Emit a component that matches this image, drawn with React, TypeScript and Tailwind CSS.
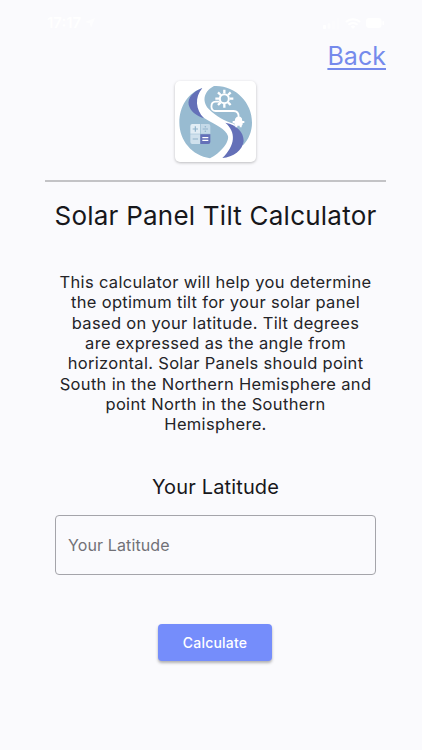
const PARAGRAPH = [
  'This calculator will help you determine',
  'the optimum tilt for your solar panel',
  'based on your latitude. Tilt degrees',
  'are expressed as the angle from',
  'horizontal. Solar Panels should point',
  'South in the Northern Hemisphere and',
  'point North in the Southern',
  'Hemisphere.',
];

function StatusBar() {
  return (
    <div className="flex h-[46px] items-center justify-between pr-[38px] pl-[47px] text-white">
      <div className="flex items-center gap-1">
        <span className="text-[15px] font-semibold">17:17</span>
        <svg width="10" height="10" viewBox="0 0 10 10" fill="currentColor" opacity=".7">
          <path d="M10 0 6 10 4.8 5.2 0 4z" />
        </svg>
      </div>
      <div className="flex items-center gap-[5px]">
        <svg width="17" height="11" viewBox="0 0 17 11" fill="currentColor">
          <rect x="0" y="7" width="3" height="4" rx="1" />
          <rect x="4.5" y="5" width="3" height="6" rx="1" opacity=".5" />
          <rect x="9" y="2.5" width="3" height="8.5" rx="1" opacity=".3" />
          <rect x="13.5" y="0" width="3" height="11" rx="1" opacity=".3" />
        </svg>
        <svg width="16" height="11" viewBox="0 0 16 11" fill="none" stroke="currentColor" strokeWidth="2">
          <path d="M1 4a10 10 0 0 1 14 0M3.5 6.7a6.5 6.5 0 0 1 9 0" />
          <path d="m8 11-2.4-2.4a3.4 3.4 0 0 1 4.800 0z" fill="currentColor" stroke="none" />
        </svg>
        <svg width="18" height="10" viewBox="0 0 18 10" fill="currentColor">
          <rect width="15.5" height="10" rx="3" />
          <rect x="16.5" y="3" width="1.5" height="4" rx=".7" />
        </svg>
      </div>
    </div>
  );
}

function Logo() {
  return (
    <svg width="81" height="81" viewBox="29 27 243 243">
      <path d="M111 48C68 62 42 104 42 151C42 206 80 251 134 259C164 244 192 212 188 192C182 170 150 158 120 140C84 117 73 82 111 48Z" fill="#98bbd1" />
      <path d="M146 42C207 38 261 90 260 152C260 178 250 202 233 220L206 155C180 150 151 132 131 112C106 85 119 55 146 42Z" fill="#98bbd1" />
      <path d="M111 48C84 58 66 78 70 98C75 117 92 131 116 139C91 113 87 76 111 48Z" fill="#6470b8" />
      <path d="M180 152C213 181 210 219 171 258C204 256 232 235 235 207C235 181 215 158 180 152Z" fill="#6470b8" />
      <g fill="none" stroke="#fff" strokeLinecap="butt" strokeLinejoin="round">
        <circle cx="177" cy="80" r="13.5" strokeWidth="6" />
        <path d="M177 64v-11M188 69l8-8M193 80h11M188 91l8 8M177 96v11M166 91l-8 8M161 80h-11M166 69l-8-8" strokeWidth="7" />
        <path d="M163 89H151C134 90 134 117 151 117H205C215 117 220 122 220 135" strokeWidth="5.5" />
      </g>
      <path d="M215 134H225Q231 137 231 147H237V153H232V156Q232 160 229 161V166H223V161H216V166H210V161Q207 160 207 156V153H202V147H208Q209 137 215 134Z" fill="#fff" />
      <path d="M81 156H104V185H75V162Q75 156 81 156Z" fill="#e2edf5" />
      <path d="M106 156H129Q135 156 135 162V185H106Z" fill="#c4d9e8" />
      <path d="M75 187H104V216H81Q75 216 75 210Z" fill="#d0e1ed" />
      <path d="M105 187H135V210Q135 216 129 216H105Z" fill="#6470b8" />
      <g fill="none" strokeWidth="3.5">
        <path d="M82 171H98M90 163V179M82 201H98" stroke="#8fb2ca" />
        <path d="M112 171H128" stroke="#8fb2ca" />
        <path d="M111 197H129M111 205H129" stroke="#fff" strokeWidth="4" />
      </g>
      <circle cx="120" cy="164.500" r="2.300" fill="#8fb2ca" />
      <circle cx="120" cy="177.500" r="2.300" fill="#8fb2ca" />
    </svg>
  );
}

export default function App() {
  return (
    <div className="min-h-[750px] w-full bg-[#fafafd] font-['Inter',sans-serif] text-[#17171b]">
      <StatusBar />
      <main className="flex flex-col items-center pr-[36px] pl-[45px]">
        <a href="#" className="-mt-[8px] self-end text-[25px] leading-[36px] tracking-[0.05px] text-[#758aec] underline decoration-[1.5px] underline-offset-[3px]">
          Back
        </a>
        <div className="mt-[7px] h-[81px] w-[81px] overflow-hidden rounded-[5px] bg-white shadow-[0_1px_3px_rgba(0,0,0,0.25)]">
          <Logo />
        </div>
        <hr className="mt-[18px] w-full border-t-2 border-[#c3c3c6]" />
        <h1 className="mt-[16px] text-[26px] leading-[36px] tracking-[0.23px] whitespace-nowrap">Solar Panel Tilt Calculator</h1>
        <p className="mt-[38px] text-center text-[16.500px] leading-[20.350px] tracking-[0.32px] whitespace-nowrap text-[#242428]">
          {PARAGRAPH.map((line) => (
            <span key={line} className="block">{line}</span>
          ))}
        </p>
        <label htmlFor="latitude" className="mt-[37px] text-[20px] leading-[30px] tracking-[0.15px]">Your Latitude</label>
        <input
          id="latitude"
          placeholder="Your Latitude"
          className="mt-[13px] h-[60px] w-[321px] rounded-[4px] border border-[#a4a4aa] bg-transparent px-[12px] text-[16px] tracking-[0.12px] outline-none placeholder:text-[#717177]"
        />
        <button className="mt-[49px] mr-px h-[37px] w-[114px] rounded-[4px] bg-[#758dfb] text-[14px] font-medium tracking-[0.2px] text-white shadow-[0_2px_3px_rgba(0,0,0,0.3)]">
          Calculate
        </button>
      </main>
    </div>
  );
}
